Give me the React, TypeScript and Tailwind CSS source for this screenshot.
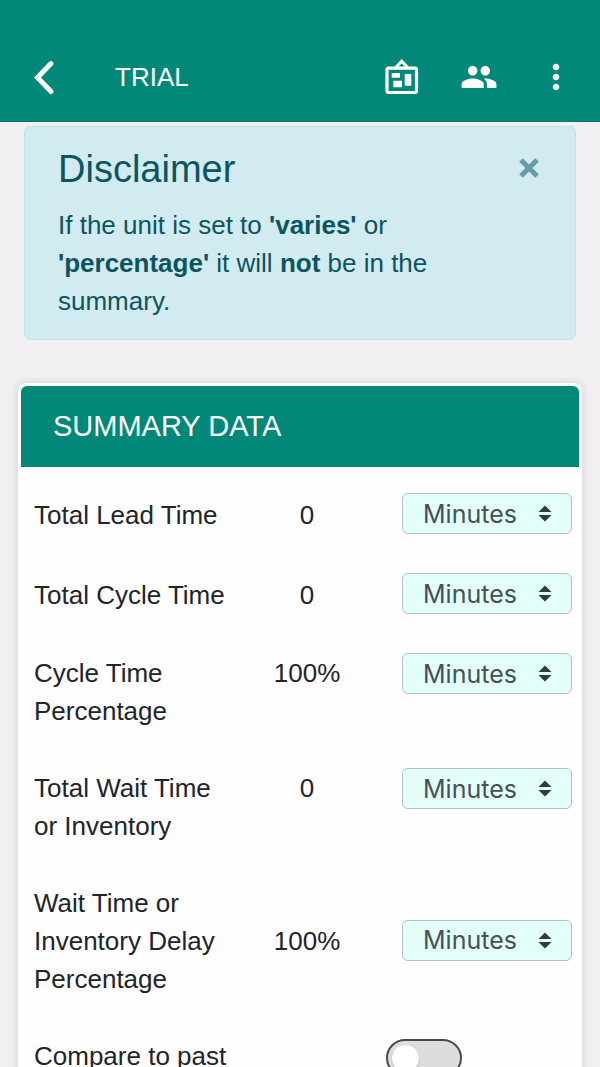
import { useState } from "react";
import { MdMoreVert, MdPeople } from "react-icons/md";

type SummaryRow = {
  id: string;
  label: string;
  value: string;
  centered?: boolean;
};

const rows: SummaryRow[] = [
  { id: "lead", label: "Total Lead Time", value: "0", centered: true },
  { id: "cycle", label: "Total Cycle Time", value: "0", centered: true },
  { id: "cycle-pct", label: "Cycle Time Percentage", value: "100%" },
  { id: "wait", label: "Total Wait Time or Inventory", value: "0" },
  { id: "wait-pct", label: "Wait Time or Inventory Delay Percentage", value: "100%", centered: true },
];

function BoardIcon() {
  return (
    <svg width="34" height="38" viewBox="0 0 34 38" fill="none" aria-hidden="true">
      <rect x="2" y="10.2" width="29.5" height="24.3" rx="1.5" stroke="white" strokeWidth="3.2" />
      <path d="M10.300 10 16.700 3.200l6.400 6.800" stroke="white" strokeWidth="3" />
      <path d="M6.700 15H15v4.700H6.700zM8.300 22.700H17v6.600H8.300zM19.700 16h6.600v11.700h-6.600z" fill="white" />
    </svg>
  );
}

function TopBar() {
  return (
    <header className="flex shrink-0 items-center border-b border-[#00796b] bg-[#018879] pt-8 pr-7 pl-6 text-white">
      <button type="button" aria-label="Back" className="flex h-[89px] w-10 items-center justify-center">
        <svg width="24" height="36" viewBox="0 0 24 36" fill="none" aria-hidden="true">
          <path d="M19 4.500 5.500 18.500 19 32.500" stroke="white" strokeWidth="5" strokeLinecap="round" />
        </svg>
      </button>
      <h1 className="ml-[51px] flex-1 pt-px text-[26px] leading-8">TRIAL</h1>
      <div className="flex items-center gap-[37px]">
        <button type="button" aria-label="Board" className="flex h-10 w-10 items-center justify-center">
          <BoardIcon />
        </button>
        <button type="button" aria-label="People" className="flex h-10 w-10 items-center justify-center">
          <MdPeople size={38} />
        </button>
        <button type="button" aria-label="More options" className="-mr-1 flex h-10 w-10 items-center justify-center">
          <MdMoreVert size={40} />
        </button>
      </div>
    </header>
  );
}

function Disclaimer({ onClose }: { onClose: () => void }) {
  return (
    <section className="mx-6 flex items-start justify-between rounded-md border border-[#bee5eb] bg-[#d1ebf0] py-[19px] pr-8 pl-[33px] text-[#0c5460]">
      <div className="max-w-[400px]">
        <h2 className="mb-[14px] text-[38px] leading-[46px]">Disclaimer</h2>
        <p className="text-[26px] leading-[38px]">
          If the unit is set to <strong>'varies'</strong> or <strong>'percentage'</strong> it will{" "}
          <strong>not</strong> be in the summary.
        </p>
      </div>
      <button type="button" aria-label="Close" onClick={onClose} className="flex h-11 w-7 items-center justify-center">
        <svg width="20" height="20" viewBox="0 0 20 20" fill="none" aria-hidden="true">
          <path d="m2 2 16 16M18 2 2 18" stroke="#669da5" strokeWidth="5" />
        </svg>
      </button>
    </section>
  );
}

function UnitSelect({ id }: { id: string }) {
  return (
    <div className="relative w-[170px]">
      <select
        id={id}
        defaultValue="Minutes"
        className="block h-[41px] w-full appearance-none rounded-md border border-[#b4bfc8] bg-[#e2fff9] pl-5 font-['Inter',sans-serif] text-[25px] leading-8 text-[#495057]"
      >
        <option>Minutes</option>
      </select>
      <svg
        className="pointer-events-none absolute top-3 right-5"
        width="14"
        height="17"
        viewBox="0 0 14 17"
        aria-hidden="true"
      >
        <path d="M7 0.500 13.500 7H0.500zM7 16.500 0.500 10h13z" fill="#303b3d" />
      </svg>
    </div>
  );
}

export default function App() {
  const [showDisclaimer, setShowDisclaimer] = useState(true);

  return (
    <div className="flex h-screen flex-col bg-[#f2f0f3] font-['Liberation_Sans',Arial,sans-serif] text-[#212529]">
      <TopBar />
      <main className="flex-1 overflow-y-auto pt-1 [scrollbar-width:none]">
        {showDisclaimer && <Disclaimer onClose={() => setShowDisclaimer(false)} />}
        <section className="mx-[18px] mt-[43px] rounded-lg bg-[#fefdff] p-[3px] shadow-[0_0_10px_rgba(0,0,0,0.15)]">
          <h2 className="rounded-t-md bg-[#018879] px-8 py-5 text-[29px] leading-[41px] text-white">SUMMARY DATA</h2>
          <div className="flex flex-col gap-[37px] pt-[25px] pr-[7px] pb-8 pl-[13px] text-[26px] leading-[38px]">
            {rows.map((row) => (
              <div
                key={row.id}
                className={`grid grid-cols-[1fr_158px_186px] ${row.centered ? "items-center" : "items-start"}`}
              >
                <label htmlFor={row.id} className="pt-0.5">
                  {row.label}
                </label>
                <span className="pt-0.5 text-center">{row.value}</span>
                <div className="flex justify-end py-px">
                  <UnitSelect id={row.id} />
                </div>
              </div>
            ))}
            <div className="grid grid-cols-[1fr_158px_186px] items-start">
              <label htmlFor="compare" className="pt-0.5">
                Compare to past
              </label>
              <input
                id="compare"
                type="checkbox"
                role="switch"
                className="col-start-3 mt-1 h-[38px] w-[76px] appearance-none rounded-full border-2 border-[#4a4a4c] bg-[#dddcde] p-1 before:block before:h-[27px] before:w-[27px] before:rounded-full before:bg-white before:shadow-[0_1px_2px_rgba(0,0,0,0.2)] checked:bg-[#018879] checked:before:ml-auto"
              />
            </div>
          </div>
        </section>
      </main>
    </div>
  );
}
